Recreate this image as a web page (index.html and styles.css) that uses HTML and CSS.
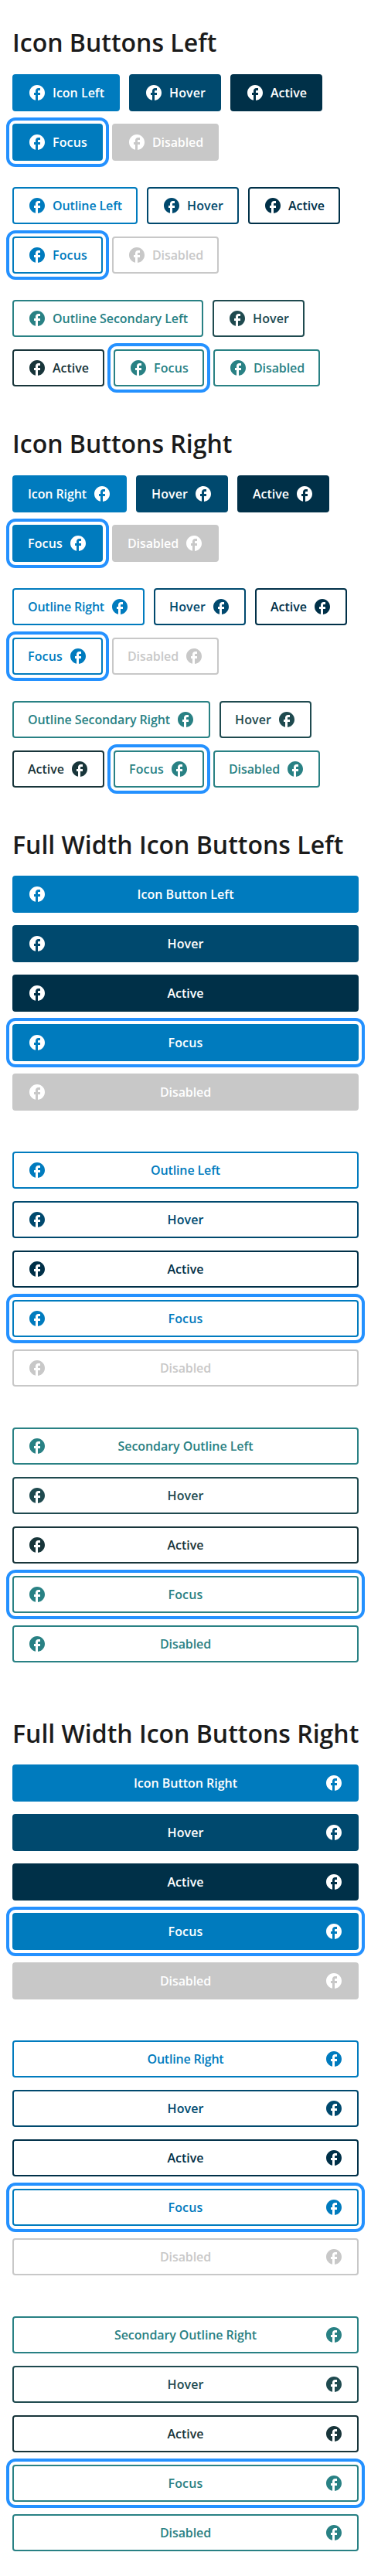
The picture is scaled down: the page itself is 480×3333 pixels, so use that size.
FILE: index.html
```html
<!DOCTYPE html>
<html lang="en">
<head>
<meta charset="utf-8">
<title>Icon Buttons</title>
<link rel="stylesheet" href="styles.css">
</head>
<body>
<main class="page" id="page"></main>
<script src="buttons.js"></script>
</body>
</html>
```

FILE: buttons.js
```js
const ICON = '<svg class="icon" viewBox="0 0 24 24" aria-hidden="true"><path d="M22 12c0-5.52-4.48-10-10-10S2 6.48 2 12c0 4.84 3.44 8.87 8 9.8V15H8v-3h2V9.5C10 7.57 11.57 6 13.5 6H16v3h-2c-.55 0-1 .45-1 1v2h3v3h-3v6.95c5.05-.5 9-4.76 9-9.95z"/></svg>';

const STATES = ['default', 'hover', 'active', 'focus', 'disabled'];

const WIDTHS = {
  'Icon Left': 67,
  'Icon Right': 76,
  'Outline Left': 90,
  'Outline Right': 99,
  'Outline Secondary Left': 175,
  'Outline Secondary Right': 184,
  'Icon Button Left': 125,
  'Icon Button Right': 134,
  'Secondary Outline Left': 175,
  'Secondary Outline Right': 184,
  'Hover': 47,
  'Active': 47,
  'Focus': 45,
  'Disabled': 66,
};

const SECTIONS = [
  { title: 'Icon Buttons Left', side: 'left', full: false,
    labels: ['Icon Left', 'Outline Left', 'Outline Secondary Left'] },
  { title: 'Icon Buttons Right', side: 'right', full: false,
    labels: ['Icon Right', 'Outline Right', 'Outline Secondary Right'] },
  { title: 'Full Width Icon Buttons Left', side: 'left', full: true,
    labels: ['Icon Button Left', 'Outline Left', 'Secondary Outline Left'] },
  { title: 'Full Width Icon Buttons Right', side: 'right', full: true,
    labels: ['Icon Button Right', 'Outline Right', 'Secondary Outline Right'] },
];

const VARIANTS = ['solid', 'outline', 'secondary'];

function button(variant, state, side, label) {
  const text = state === 'default' ? label : state[0].toUpperCase() + state.slice(1);
  const span = `<span class="label">${text}</span>`;
  const content = side === 'left' ? ICON + span : span + ICON;
  return `<button type="button" class="btn ${variant} is-${state} icon-${side}">${content}</button>`;
}

document.getElementById('page').innerHTML = SECTIONS.map(s => `
  <section class="section${s.full ? ' full' : ''}">
    <h2 class="title">${s.title}</h2>
    <div class="groups">
      ${VARIANTS.map((v, i) => `<div class="group">${STATES.map(st => button(v, st, s.side, s.labels[i])).join('')}</div>`).join('')}
    </div>
  </section>`).join('');

document.querySelectorAll('.label').forEach(el => {
  const text = el.textContent;
  const width = WIDTHS[text];
  const spacing = (width - el.getBoundingClientRect().width) / text.length;
  el.style.letterSpacing = spacing.toFixed(3) + 'px';
  el.style.width = width + 'px';
});
```

FILE: styles.css
```css
* {
  box-sizing: border-box;
}

body {
  margin: 0;
  background: #fff;
  color: #1b1b1b;
  font-family: "Open Sans", sans-serif;
}

.page {
  padding: 31px 16px 32px;
}

.section {
  margin-bottom: 50px;
}

.section.full {
  margin-bottom: 68px;
}

.section:last-child {
  margin-bottom: 0;
}

.title {
  margin: 0 0 17px;
  font-size: 32px;
  font-weight: 600;
  line-height: 48px;
  white-space: nowrap;
}

.full .title {
  margin-bottom: 16px;
}

.groups {
  display: flex;
  flex-direction: column;
  gap: 34px;
}

.group {
  display: flex;
  flex-wrap: wrap;
  gap: 16px 12px;
}

.btn {
  display: flex;
  align-items: center;
  gap: 8px;
  height: 48px;
  padding: 0 18px;
  border: 2px solid var(--tone);
  border-radius: 4px;
  background: #fff;
  color: var(--tone);
  font: 600 16px/24px "Open Sans", sans-serif;
  white-space: nowrap;
}

.icon {
  flex: none;
  width: 24px;
  height: 24px;
  fill: currentColor;
}

.full .groups {
  gap: 53px;
}

.full .group {
  display: grid;
}

.full .btn {
  display: grid;
  grid-template-columns: 24px 1fr 24px;
}

.label {
  display: block;
  flex: none;
}

.full .label {
  grid-column: 2;
  grid-row: 1;
  justify-self: center;
}

.full .icon-right .icon {
  grid-column: 3;
}

.solid,
.outline {
  --tone: #007bbe;
}

.is-hover {
  --tone: #00496e;
}

.is-active {
  --tone: #003048;
}

.is-disabled {
  --tone: #c8c8c8;
}

.secondary,
.secondary.is-disabled {
  --tone: #298184;
}

.secondary.is-hover {
  --tone: #1f4a4f;
}

.secondary.is-active {
  --tone: #18353a;
}

.solid {
  background: var(--tone);
  color: #fff;
}

.is-focus {
  outline: 4px solid #2491ff;
  outline-offset: 4px;
}
```
